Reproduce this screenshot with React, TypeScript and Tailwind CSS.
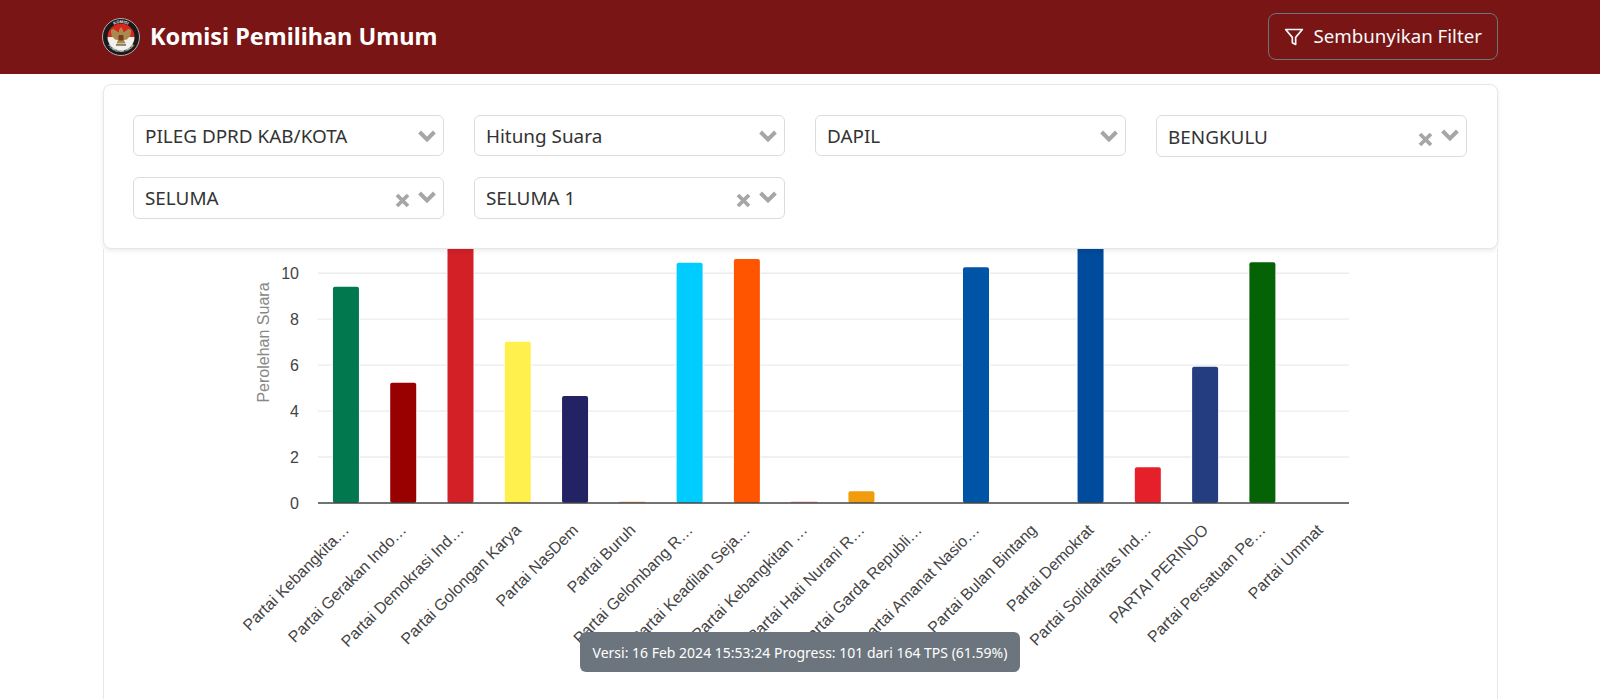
import React from "react";

const font = "font-['Noto_Sans',sans-serif]";

const bars: { label: string; top: number; color: string }[] = [
  { label: "Partai Kebangkita…", top: 286.7, color: "#02784e" },
  { label: "Partai Gerakan Indo…", top: 382.7, color: "#990000" },
  { label: "Partai Demokrasi Ind…", top: 200, color: "#d32027" },
  { label: "Partai Golongan Karya", top: 341.7, color: "#fff04d" },
  { label: "Partai NasDem", top: 396, color: "#232265" },
  { label: "Partai Buruh", top: 501.6, color: "#f5b98a" },
  { label: "Partai Gelombang R…", top: 262.7, color: "#00ccff" },
  { label: "Partai Keadilan Seja…", top: 259, color: "#ff5500" },
  { label: "Partai Kebangkitan …", top: 501.6, color: "#f2a0a0" },
  { label: "Partai Hati Nurani R…", top: 491.3, color: "#f09c0d" },
  { label: "Partai Garda Republi…", top: 503, color: "#888888" },
  { label: "Partai Amanat Nasio…", top: 267.3, color: "#0054a6" },
  { label: "Partai Bulan Bintang", top: 503, color: "#888888" },
  { label: "Partai Demokrat", top: 200, color: "#004b9b" },
  { label: "Partai Solidaritas Ind…", top: 467.3, color: "#e6202a" },
  { label: "PARTAI PERINDO", top: 366.7, color: "#243c80" },
  { label: "Partai Persatuan Pe…", top: 262.3, color: "#056205" },
  { label: "Partai Ummat", top: 503, color: "#888888" },
];

function Logo() {
  return (
    <svg width="38" height="38" viewBox="0 0 38 38" className="-ml-[0.5px] shrink-0">
      <circle cx="19" cy="19" r="18.5" fill="#1a1a1a" />
      <circle cx="19" cy="19" r="18.5" fill="none" stroke="#cfcfcf" strokeWidth="0.8" />
      <path d="M5.5 19a13.5 13.5 0 0 1 27 0z" fill="#d8261c" />
      <path d="M5.5 19a13.5 13.5 0 0 0 27 0z" fill="#f4f1ea" />
      <path d="M19 9l1.8 2.4 .6 3 5.4-3.6 2.4 1.4-.8 5.6-3.4 3.6-3 .6 1.5 3.5h-9l1.5-3.5-3-.6-3.4-3.6-.8-5.6 2.4-1.4 5.4 3.6 .6-3z" fill="#a98a4e" />
      <rect x="16.5" y="17" width="5" height="5.4" rx="1" fill="#7a3b1f" />
      <rect x="14" y="26.2" width="10" height="1.5" fill="#6b6b4f" />
      <defs>
        <path id="logoTop" d="M5 19a14 14 0 0 1 28 0" />
        <path id="logoBottom" d="M3.6 21a15.6 15.6 0 0 0 30.8 0" />
      </defs>
      <text fontSize="4" fontWeight="700" fill="#f5f5f5" fontFamily="Liberation Sans, sans-serif" textAnchor="middle">
        <textPath href="#logoTop" startOffset="50%">KOMISI</textPath>
      </text>
      <text fontSize="3.4" fontWeight="700" fill="#f5f5f5" fontFamily="Liberation Sans, sans-serif" textAnchor="middle">
        <textPath href="#logoBottom" startOffset="50%">PEMILIHAN UMUM</textPath>
      </text>
    </svg>
  );
}

function Select({ value, clearable }: { value: string; clearable?: boolean }) {
  return (
    <div className={`flex items-center rounded-md border-[1.5px] border-[#dcdcdc] pl-[11px] pr-[7px] ${clearable ? "h-[42px]" : "h-[41px]"}`}>
      <span className="flex-1 pt-[2px] text-[18.9px] leading-none text-[#333]">{value}</span>
      {clearable && (
        <svg width="15" height="15" viewBox="0 0 15 15" className="mr-[8px] mt-[6px]">
          <path d="M2 2l11 11M13 2L2 13" stroke="#a6a6a6" strokeWidth="3.8" />
        </svg>
      )}
      <svg width="18" height="12" viewBox="0 0 18 12" className={clearable ? "mb-[2px]" : ""}>
        <path d="M1.6 2l7.4 7.4L16.4 2" fill="none" stroke="#a6a6a6" strokeWidth="4" />
      </svg>
    </div>
  );
}

function Chart() {
  const left = 318;
  const right = 1349;
  const step = (right - left) / 18;
  const zero = 503;
  const unit = 22.98;
  return (
    <svg width="1393" height="450" viewBox="104 249 1393 450" className="block">
      {[2, 4, 6, 8, 10].map((v) => (
        <line key={v} x1={left} x2={right} y1={zero - v * unit} y2={zero - v * unit} stroke="#ececec" strokeWidth="1.4" />
      ))}
      {bars.map((b, i) => {
        const cx = left + step * (i + 0.5);
        if (b.top >= 503) return null;
        const tiny = zero - b.top < 2;
        return (
          <rect
            key={b.label}
            x={cx - 13.7}
            y={b.top}
            width={26}
            height={zero - b.top}
            rx={tiny ? 0 : 2}
            fill={b.color}
            stroke={tiny ? "none" : "#ffffff"}
            strokeWidth={1.4}
            paintOrder="stroke"
          />
        );
      })}
      <line x1={left} x2={right} y1={zero} y2={zero} stroke="#444" strokeWidth="1.4" />
      {[0, 2, 4, 6, 8, 10].map((v) => (
        <text key={v} x={299} y={zero - v * unit + 6} textAnchor="end" fontSize="16" fill="#444" fontFamily="Liberation Sans, sans-serif">
          {v}
        </text>
      ))}
      <text
        transform="translate(269 342.5) rotate(-90)"
        textAnchor="middle"
        fontSize="16"
        fill="#888"
        fontFamily="Liberation Sans, sans-serif"
      >
        Perolehan Suara
      </text>
      {bars.map((b, i) => {
        const cx = left + step * (i + 0.5);
        return (
          <text
            key={b.label}
            transform={`translate(${cx + 3.5} 531) rotate(-45)`}
            textAnchor="end"
            fontSize="16"
            fill="#444"
            fontFamily="Liberation Sans, sans-serif"
          >
            {b.label}
          </text>
        );
      })}
    </svg>
  );
}

export default function App() {
  return (
    <div className={`relative flex h-[699px] w-full flex-col overflow-hidden bg-white ${font}`}>
      <header className="flex h-[74px] shrink-0 items-center justify-between bg-[#7a1515] px-[102.5px]">
        <div className="mb-[1px] flex items-center gap-[10px]">
          <Logo />
          <span className="text-[23.5px] font-bold text-white">Komisi Pemilihan Umum</span>
        </div>
        <button className="mb-[1px] flex h-[47px] w-[230px] items-center rounded-lg border border-[#6c757d] pl-[15px] text-[18.7px] text-[#f8f9fa]">
          <svg width="20" height="20" viewBox="0 0 24 24" fill="none" stroke="currentColor" strokeWidth="2" strokeLinejoin="round" strokeLinecap="round" className="mr-[10px]">
            <path d="M22 3H2l8 9.46V19l4 2v-8.54L22 3z" />
          </svg>
          Sembunyikan Filter
        </button>
      </header>
      <main className="flex min-h-0 flex-1 flex-col px-[102.5px] pt-[10px]">
        <section className="relative z-10 grid h-[165px] shrink-0 grid-cols-4 items-start gap-x-[30px] gap-y-[19.5px] rounded-lg border border-[#e5e7eb] bg-white px-[29.5px] py-[30px] shadow-[0_2px_4px_rgba(0,0,0,0.08)]">
          <Select value="PILEG DPRD KAB/KOTA" />
          <Select value="Hitung Suara" />
          <Select value="DAPIL" />
          <Select value="BENGKULU" clearable />
          <Select value="SELUMA" clearable />
          <Select value="SELUMA 1" clearable />
        </section>
        <section className="min-h-0 flex-1 border-x border-[#e5e7eb] bg-white">
          <Chart />
        </section>
      </main>
      <div className="absolute bottom-[27px] left-1/2 flex h-[40px] w-[440px] -translate-x-1/2 items-center justify-center rounded-md bg-[#6c757d] text-[14px] text-white">
        Versi: 16 Feb 2024 15:53:24 Progress: 101 dari 164 TPS (61.59%)
      </div>
    </div>
  );
}
